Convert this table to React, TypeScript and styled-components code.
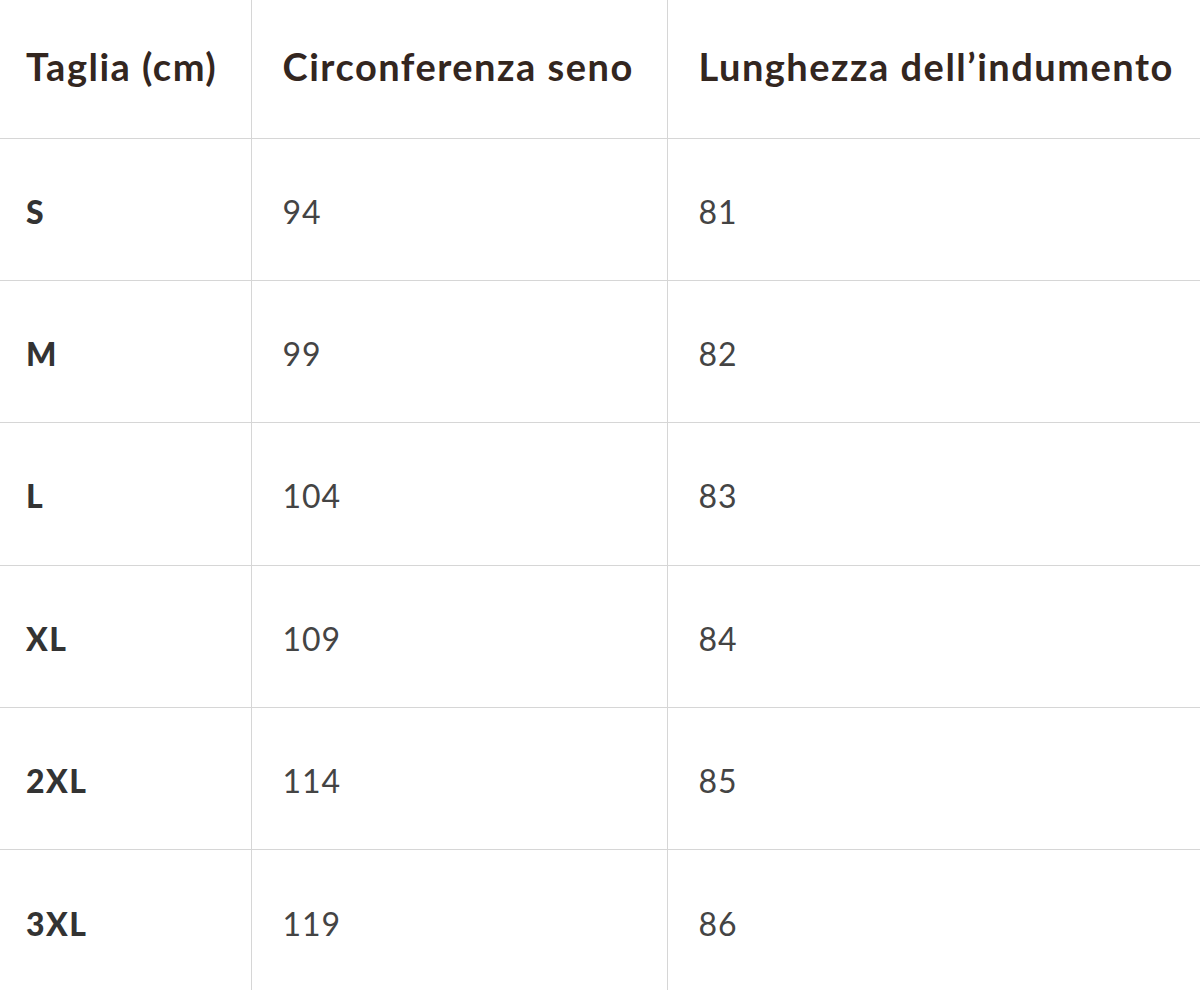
import styled, { createGlobalStyle } from 'styled-components'

const GlobalStyle = createGlobalStyle`
    html, body {
        margin: 0;
        padding: 0;
        background: #fff;
    }
    body {
        font-family: 'Lato', 'Open Sans', sans-serif;
    }
`

const Table = styled.table`
    width: 1200px;
    border-collapse: collapse;
    table-layout: fixed;
`
const Col = styled.col<{ width: number }>`
    width: ${props => props.width}px;
`
const HeadRow = styled.tr`
    height: 138px;
    border-bottom: 1px solid #d6d6d6;
`
const BodyRow = styled.tr<{ last?: boolean }>`
    height: 142.4px;
    border-bottom: ${props => props.last ? 'none' : '1px solid #d6d6d6'};
`
const HeadCell = styled.th<{ first?: boolean }>`
    padding: 0 0 6px ${props => props.first ? '26px' : '31px'};
    text-align: left;
    vertical-align: middle;
    font-size: 38px;
    font-weight: 700;
    letter-spacing: 1.5px;
    color: #33261f;
    white-space: nowrap;
    border-left: ${props => props.first ? 'none' : '1px solid #d6d6d6'};
`
const SizeCell = styled.td`
    padding: 4px 0 0 26px;
    font-size: 32px;
    font-weight: 900;
    letter-spacing: 1.5px;
    color: #333;
`
const ValueCell = styled.td`
    padding: 4px 0 0 31px;
    font-size: 32px;
    font-weight: 400;
    letter-spacing: 1px;
    color: #444;
    border-left: 1px solid #d6d6d6;
`

const rows = [
    { size: 'S', chest: 94, length: 81 },
    { size: 'M', chest: 99, length: 82 },
    { size: 'L', chest: 104, length: 83 },
    { size: 'XL', chest: 109, length: 84 },
    { size: '2XL', chest: 114, length: 85 },
    { size: '3XL', chest: 119, length: 86 },
]

export default function App() {
    return (
        <>
            <GlobalStyle />
            <Table>
                <colgroup>
                    <Col width={251} />
                    <Col width={416} />
                    <Col width={533} />
                </colgroup>
                <thead>
                    <HeadRow>
                        <HeadCell first>Taglia (cm)</HeadCell>
                        <HeadCell>Circonferenza seno</HeadCell>
                        <HeadCell>Lunghezza dell’indumento</HeadCell>
                    </HeadRow>
                </thead>
                <tbody>
                    {rows.map((r, i) => (
                        <BodyRow key={r.size} last={i === rows.length - 1}>
                            <SizeCell>{r.size}</SizeCell>
                            <ValueCell>{r.chest}</ValueCell>
                            <ValueCell>{r.length}</ValueCell>
                        </BodyRow>
                    ))}
                </tbody>
            </Table>
        </>
    )
}
